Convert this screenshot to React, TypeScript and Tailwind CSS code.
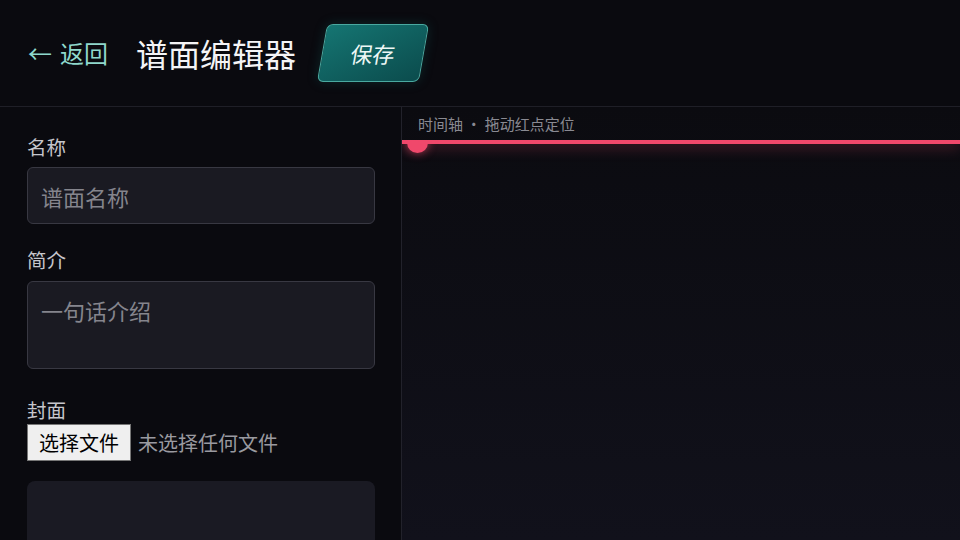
import React from "react";

const font = {
  fontFamily: '"Noto Sans CJK SC", "Noto Sans", sans-serif',
};

const Label = ({ children }: { children: React.ReactNode }) => (
  <div className="shrink-0 text-[19.5px] leading-[24px] text-[#c6c6cc]">{children}</div>
);

export default function App() {
  return (
    <div
      style={font}
      className="w-[960px] h-[540px] overflow-hidden bg-[#0a0a0f] text-white flex flex-col"
    >
      <header className="h-[107px] shrink-0 flex items-center pl-[28px] border-b border-[#1f1f27]">
        <button className="text-[24px] leading-none text-[#8fd8cc] flex items-center gap-[8px]">
          <span>←</span>
          <span>返回</span>
        </button>
        <h1 className="ml-[28px] text-[32px] leading-none font-normal text-[#f4f4f6]">
          谱面编辑器
        </h1>
        <button className="ml-[26px] w-[102px] h-[58px] -skew-x-[10deg] rounded-[6px] border border-[#4aa9a0] bg-gradient-to-br from-[#157572] to-[#0b4c4d] shadow-[0_0_12px_rgba(20,120,115,0.25)] flex items-center justify-center">
          <span className="text-[22px] text-[#eef8f6]">保存</span>
        </button>
      </header>

      <div className="flex flex-1 min-h-0">
        <aside className="w-[402px] shrink-0 border-r border-[#22222b] px-[27px] pt-[28px] flex flex-col">
          <Label>名称</Label>
          <input
            placeholder="谱面名称"
            className="shrink-0 mt-[8px] w-[348px] h-[57px] rounded-[6px] border border-[#383842] bg-[#1a1a22] px-[13px] text-[22px] text-white placeholder:text-[#85858d] outline-none"
          />
          <div className="shrink-0 mt-[24px]">
            <Label>简介</Label>
          </div>
          <textarea
            placeholder="一句话介绍"
            className="shrink-0 mt-[9px] w-[348px] h-[88px] resize-none rounded-[6px] border border-[#383842] bg-[#1a1a22] px-[13px] pt-[14px] text-[22px] leading-[28px] text-white placeholder:text-[#85858d] outline-none"
          />
          <div className="shrink-0 mt-[29px]">
            <Label>封面</Label>
          </div>
          <div className="shrink-0 mt-[2px] flex items-center gap-[7px]">
            <button className="h-[37px] px-[11px] bg-[#efefef] border border-[#767676] text-[20px] leading-none text-black">
              选择文件
            </button>
            <span className="text-[20px] text-[#9a9aa0]">未选择任何文件</span>
          </div>
          <div className="shrink-0 mt-[20px] w-[348px] h-[120px] rounded-[8px] bg-[#1a1a23]" />
        </aside>

        <main className="flex-1 flex flex-col bg-gradient-to-b from-[#0b0b10] to-[#11111b]">
          <div className="pl-[16px] pt-[7px] text-[15px] leading-[20px] text-[#8a8a92]">
            时间轴 · 拖动红点定位
          </div>
          <div className="relative mt-[6px] flex-1 overflow-hidden">
            <div className="h-[4px] bg-[#f0486b] shadow-[0_2px_14px_rgba(240,72,107,0.55)]" />
            <div className="absolute left-[5px] top-[-8px] w-[21px] h-[21px] rounded-full bg-[#f0486b] shadow-[0_0_10px_rgba(240,72,107,0.7)]" />
          </div>
        </main>
      </div>
    </div>
  );
}
